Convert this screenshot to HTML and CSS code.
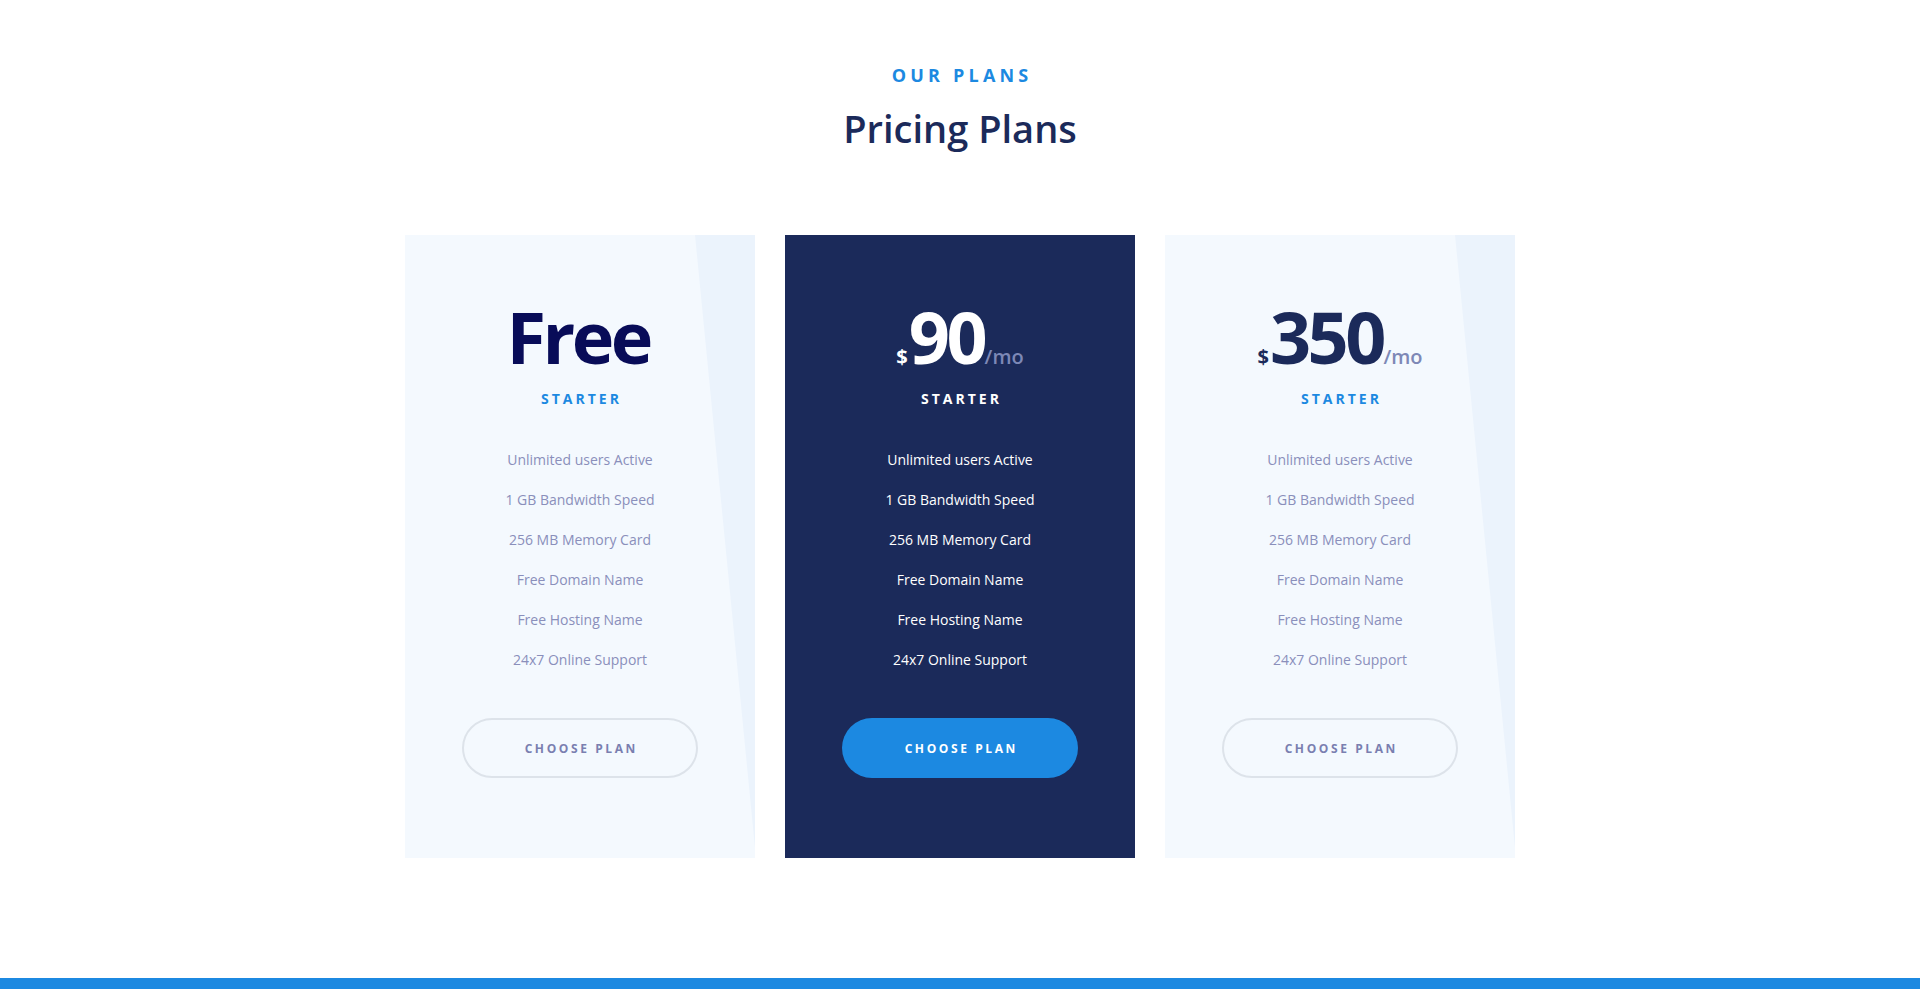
FILE: index.html
```html
<!DOCTYPE html>
<html lang="en">
<head>
<meta charset="utf-8">
<title>Pricing Plans</title>
<link rel="stylesheet" href="styles.css">
</head>
<body>
<section class="pricing">
  <header class="pricing-head">
    <p class="eyebrow">OUR PLANS</p>
    <h2 class="title">Pricing Plans</h2>
  </header>
  <div class="cards">
    <article class="card card-light">
      <div class="price"><span class="amount amount-free">Free</span></div>
      <p class="tier">STARTER</p>
      <ul class="features">
        <li>Unlimited users Active</li>
        <li>1 GB Bandwidth Speed</li>
        <li>256 MB Memory Card</li>
        <li>Free Domain Name</li>
        <li>Free Hosting Name</li>
        <li>24x7 Online Support</li>
      </ul>
      <a class="btn btn-outline" href="#">CHOOSE PLAN</a>
    </article>
    <article class="card card-dark">
      <div class="price"><span class="currency">$</span><span class="amount">90</span><span class="period">/mo</span></div>
      <p class="tier">STARTER</p>
      <ul class="features">
        <li>Unlimited users Active</li>
        <li>1 GB Bandwidth Speed</li>
        <li>256 MB Memory Card</li>
        <li>Free Domain Name</li>
        <li>Free Hosting Name</li>
        <li>24x7 Online Support</li>
      </ul>
      <a class="btn btn-solid" href="#">CHOOSE PLAN</a>
    </article>
    <article class="card card-light">
      <div class="price"><span class="currency">$</span><span class="amount">350</span><span class="period">/mo</span></div>
      <p class="tier">STARTER</p>
      <ul class="features">
        <li>Unlimited users Active</li>
        <li>1 GB Bandwidth Speed</li>
        <li>256 MB Memory Card</li>
        <li>Free Domain Name</li>
        <li>Free Hosting Name</li>
        <li>24x7 Online Support</li>
      </ul>
      <a class="btn btn-outline" href="#">CHOOSE PLAN</a>
    </article>
  </div>
</section>
<footer class="footer"></footer>
</body>
</html>
```
FILE: styles.css
```css
* { box-sizing: border-box; }
html, body { margin: 0; padding: 0; }
body {
  font-family: "Open Sans", "Noto Sans", sans-serif;
  background: #ffffff;
  color: #1b2a5a;
}
.pricing {
  padding: 63px 0 120px;
  display: flex;
  flex-direction: column;
  align-items: center;
}
.pricing-head { text-align: center; }
.eyebrow {
  margin: 0;
  font-size: 18px;
  line-height: 24px;
  font-weight: 700;
  letter-spacing: 4.2px;
  padding-left: 4.2px;
  color: #1c89e1;
}
.title {
  margin: 17px 0 0;
  font-size: 38px;
  line-height: 48px;
  font-weight: 600;
  color: #1b2a5a;
}
.cards {
  margin-top: 83px;
  display: flex;
  gap: 30px;
}
.card {
  position: relative;
  width: 350px;
  height: 623px;
  padding-top: 65px;
  display: flex;
  flex-direction: column;
  align-items: center;
  overflow: hidden;
}
.card > * { position: relative; }
.card-light { background: #f4f9fe; }
.card-light::before {
  content: "";
  position: absolute;
  inset: 0;
  background: #ebf3fc;
  clip-path: polygon(290px 0, 100% 0, 100% 100%, 351px 100%);
}
.card-dark { background: #1b2a5a; }
.price {
  display: flex;
  align-items: baseline;
  height: 72px;
  line-height: 72px;
}
.amount {
  font-size: 72px;
  font-weight: 700;
  letter-spacing: -3.5px;
  margin-right: 3.5px;
  color: #1b2a5a;
}
.amount-free { color: #080c58; }
.card-dark .amount { color: #ffffff; }
.currency {
  font-size: 20px;
  font-weight: 700;
  color: #1b2a5a;
  margin-right: 1px;
}
.card-dark .currency { color: #ffffff; }
.period {
  font-size: 20px;
  font-weight: 600;
  color: #7d88b6;
  margin-left: -3px;
}
.tier {
  margin: 17px 0 0;
  font-size: 14px;
  line-height: 20px;
  font-weight: 700;
  letter-spacing: 3px;
  padding-left: 3px;
  color: #1c89e1;
}
.card-dark .tier { color: #ffffff; }
.features {
  list-style: none;
  margin: 31px 0 0;
  padding: 0;
  text-align: center;
}
.features li {
  font-size: 14px;
  line-height: 40px;
  color: #8a8fbb;
}
.card-dark .features li { color: #ffffff; }
.btn {
  margin-top: 38px;
  width: 236px;
  height: 60px;
  border-radius: 30px;
  display: flex;
  align-items: center;
  justify-content: center;
  text-decoration: none;
  font-size: 12px;
  font-weight: 700;
  letter-spacing: 2.6px;
  padding-left: 2.6px;
}
.btn-outline {
  border: 2px solid #dde3ea;
  color: #7a7fb0;
}
.btn-solid {
  background: #1c89e1;
  color: #ffffff;
}
.footer {
  height: 200px;
  background: #1c89e1;
}
```
